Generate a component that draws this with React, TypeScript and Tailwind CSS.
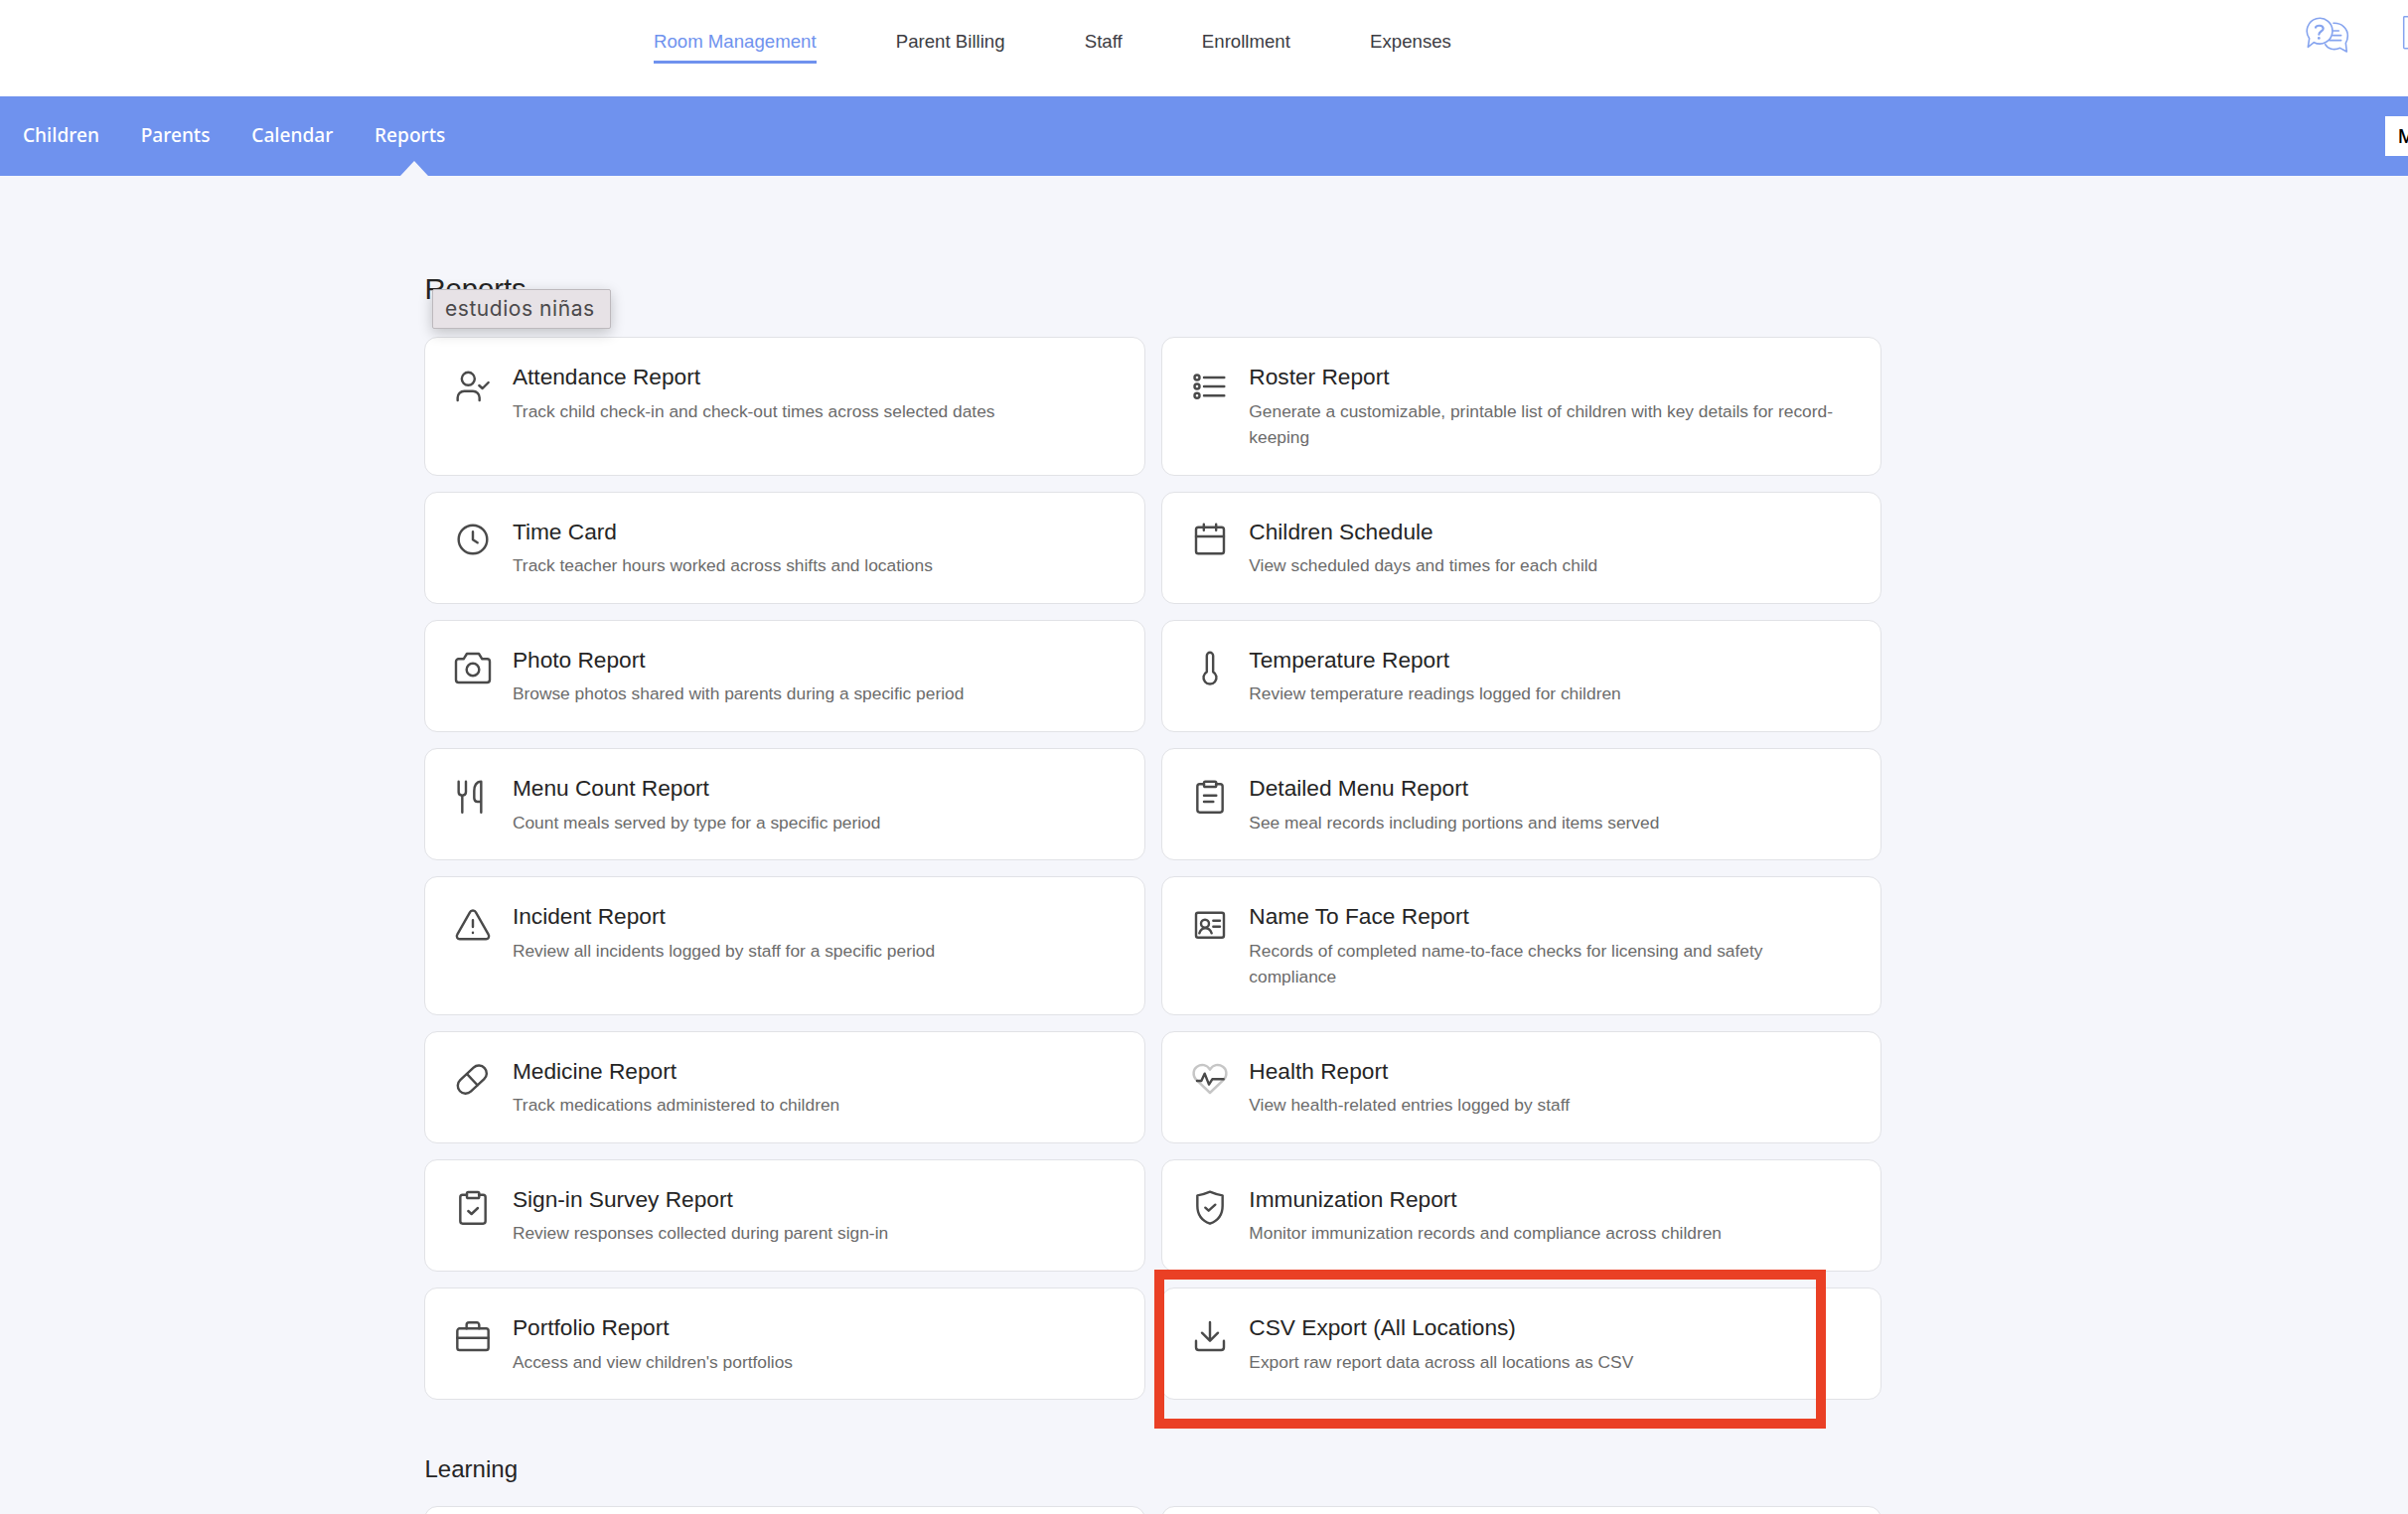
import type { ReactNode } from 'react'

interface Report {
  title: string
  description: string
  icon: ReactNode
}

const mainNav = ['Room Management', 'Parent Billing', 'Staff', 'Enrollment', 'Expenses']

const subNav = ['Children', 'Parents', 'Calendar', 'Reports']

/* =======================
   ICONS
   drawn around 0,0
======================= */

const icons = {
  attendance: (
    <>
      <circle cx="-14" cy="-20" r="19.5" />
      <path d="M-46 45v-8a20 20 0 0 1 20-20h26a20 20 0 0 1 20 20v8M19 0l10 9 18-18" />
    </>
  ),
  roster: (
    <>
      <circle cx="-39" cy="-24" r="7.5" />
      <circle cx="-39" cy="3" r="7.5" />
      <circle cx="-39" cy="31" r="7.5" />
      <path d="M-18 -24H43M-18 3H43M-18 31H43" />
    </>
  ),
  clock: (
    <>
      <circle r="43" />
      <path d="M0 -23V1L14 10" />
    </>
  ),
  calendar: (
    <>
      <rect x="-42" y="-37" width="84" height="80" rx="7" />
      <path d="M-42 -9H42M-18.5 -46V-28M18.5 -46V-28" />
    </>
  ),
  camera: (
    <>
      <path d="M-51 -18a8 8 0 0 1 8-8h15l10-16h36l10 16h15a8 8 0 0 1 8 8v55a8 8 0 0 1-8 8h-86a8 8 0 0 1-8-8z" />
      <circle cy="6" r="19" />
    </>
  ),
  thermometer: (
    <path d="M-9.5 13V-36a9.500 9.500 0 0 1 19 0V13a19.500 19.500 0 1 1-19 0z" />
  ),
  cutlery: (
    <>
      <path d="M-43 -43V-11Q-43 -1 -32 -1T-21 -11V-43M-32 -1V50" />
      <path d="M25 50V-43C10 -43 4 -30 4 -15V7Q4 18 14 18H25" />
    </>
  ),
  menu: (
    <>
      <path d="M-18 -35H-31a7 7 0 0 0-7 7V43a7 7 0 0 0 7 7H31a7 7 0 0 0 7-7V-28a7 7 0 0 0-7-7H18" />
      <rect x="-18" y="-43" width="37" height="16" rx="4" />
      <path d="M-18 -1H19M-18 18H10" />
    </>
  ),
  warning: (
    <>
      <path d="M-9 -38a10 10 0 0 1 18 0L47 29a9 9 0 0 1-8 14H-39a9 9 0 0 1-8-14z" />
      <path d="M0 -14V6M0 23.500V24" />
    </>
  ),
  idCard: (
    <>
      <rect x="-42" y="-37" width="84" height="75" rx="6" />
      <circle cx="-15" cy="-4" r="12" />
      <path d="M-32 25C-28 14 -23 10 -14 10S1 14 5 25M10 -13H30M10 5H30" />
    </>
  ),
  pill: (
    <g transform="translate(-2 2) rotate(-43)">
      <rect x="-51" y="-23.500" width="102" height="47" rx="23.500" />
      <path d="M0 -23V23" />
    </g>
  ),
  heart: (
    <>
      <path
        stroke="#c6c6c6"
        d="M0 42L-42 2C-53 -11 -51 -29 -39 -37C-26 -46 -9 -43 0 -28C9 -43 26 -46 39 -37C51 -29 53 -11 42 2Z"
      />
      <path d="M-39 6H-26L-16 -16L-3 17L7 1H41" />
    </>
  ),
  survey: (
    <>
      <path d="M-18 -37H-31a7 7 0 0 0-7 7V43a7 7 0 0 0 7 7H31a7 7 0 0 0 7-7V-30a7 7 0 0 0-7-7H18" />
      <rect x="-18" y="-45" width="37" height="18" rx="4" />
      <path d="M-14 12l10 9 19-18" />
    </>
  ),
  shield: (
    <>
      <path d="M0 -46Q18 -38 38 -35V-4C38 24 22 42 0 50C-22 42 -38 24 -38 -4V-35Q-18 -38 0 -46Z" />
      <path d="M-14 2l10 9 20-18" />
    </>
  ),
  briefcase: (
    <>
      <rect x="-47" y="-20" width="94" height="65" rx="7" />
      <path d="M-47 8H47M-19 -20v-11a7 7 0 0 1 7-7h24a7 7 0 0 1 7 7v11" />
    </>
  ),
  download: (
    <path d="M0 -39V16M-24 -7L0 17L24 -7M-42 17V37a8 8 0 0 0 8 8H34a8 8 0 0 0 8-8V17" />
  ),
}

const reports: Report[] = [
  {
    title: 'Attendance Report',
    description: 'Track child check-in and check-out times across selected dates',
    icon: icons.attendance,
  },
  {
    title: 'Roster Report',
    description:
      'Generate a customizable, printable list of children with key details for record-keeping',
    icon: icons.roster,
  },
  {
    title: 'Time Card',
    description: 'Track teacher hours worked across shifts and locations',
    icon: icons.clock,
  },
  {
    title: 'Children Schedule',
    description: 'View scheduled days and times for each child',
    icon: icons.calendar,
  },
  {
    title: 'Photo Report',
    description: 'Browse photos shared with parents during a specific period',
    icon: icons.camera,
  },
  {
    title: 'Temperature Report',
    description: 'Review temperature readings logged for children',
    icon: icons.thermometer,
  },
  {
    title: 'Menu Count Report',
    description: 'Count meals served by type for a specific period',
    icon: icons.cutlery,
  },
  {
    title: 'Detailed Menu Report',
    description: 'See meal records including portions and items served',
    icon: icons.menu,
  },
  {
    title: 'Incident Report',
    description: 'Review all incidents logged by staff for a specific period',
    icon: icons.warning,
  },
  {
    title: 'Name To Face Report',
    description: 'Records of completed name-to-face checks for licensing and safety compliance',
    icon: icons.idCard,
  },
  {
    title: 'Medicine Report',
    description: 'Track medications administered to children',
    icon: icons.pill,
  },
  {
    title: 'Health Report',
    description: 'View health-related entries logged by staff',
    icon: icons.heart,
  },
  {
    title: 'Sign-in Survey Report',
    description: 'Review responses collected during parent sign-in',
    icon: icons.survey,
  },
  {
    title: 'Immunization Report',
    description: 'Monitor immunization records and compliance across children',
    icon: icons.shield,
  },
  {
    title: 'Portfolio Report',
    description: "Access and view children's portfolios",
    icon: icons.briefcase,
  },
  {
    title: 'CSV Export (All Locations)',
    description: 'Export raw report data across all locations as CSV',
    icon: icons.download,
  },
]

function ReportCard({ report }: { report: Report }) {
  return (
    <a className="flex rounded-[13px] border border-[#e1e2e6] bg-white pt-[24px] pr-[31px] pb-[24.300px] pl-[28px]">
      <svg
        viewBox="-60 -60 120 120"
        className="mt-[3.200px] size-[40px] shrink-0"
        fill="none"
        stroke="#4a4a4a"
        strokeWidth="7.3"
        strokeLinecap="round"
        strokeLinejoin="round"
      >
        {report.icon}
      </svg>
      <div className="ml-[19.500px]">
        <h3 className="text-[22.700px] leading-[30px] text-[#252525]">{report.title}</h3>
        <p className="mt-[6.300px] text-[17.360px] leading-[26.300px] text-[#6b6b6b]">
          {report.description}
        </p>
      </div>
    </a>
  )
}

export default function App() {
  return (
    <div className="relative h-[1524px] w-[2424px] overflow-hidden bg-[#f5f6fb] font-['Liberation_Sans',Arial,sans-serif]">
      {/* TOP BAR */}
      <header className="flex h-[97px] items-start justify-between bg-white pl-[658px]">
        <nav className="flex gap-[80.200px] pt-[28px]">
          {mainNav.map((item, i) => (
            <a
              key={item}
              className={
                i === 0
                  ? 'h-[36px] border-b-3 border-[#6f92ee] text-[18.640px] leading-[27px] text-[#6f92ee]'
                  : 'h-[36px] text-[18.640px] leading-[27px] text-[#3c3c43]'
              }
            >
              {item}
            </a>
          ))}
        </nav>
        <div className="flex pt-[16px]">
          {/* help */}
          <svg
            viewBox="288 48 138 120"
            className="h-[40px] w-[46px]"
            fill="none"
            stroke="#86a4ef"
            strokeWidth="4.8"
            strokeLinejoin="round"
            strokeLinecap="round"
          >
            <path d="M302 116A38.500 38.500 0 1 1 316 128L298 142Z" />
            <path d="M375 70C400 69 418 86 418 108Q418 120 412 130L415 156L395 145C376 153 358 148 350 134" />
            <path d="M374 93H391M374 107H398M363 122H398" />
            <path strokeWidth="6.5" d="M321 83C323 76 343 74 344 86C344 95 331 94 331 104" />
            <path strokeWidth="8" d="M331 115V115.500" />
          </svg>
          <svg
            viewBox="0 0 27 36"
            className="ml-[51px] h-[36px] w-[7px] shrink-0"
            preserveAspectRatio="xMinYMin slice"
            fill="none"
            stroke="#86a4ef"
            strokeWidth="1.5"
          >
            <rect x="2.7" y="0.7" width="24" height="32" rx="1" />
          </svg>
        </div>
      </header>

      {/* BLUE BAR */}
      <div className="flex h-[80px] items-center justify-between bg-[#6f92ee] pl-[23px]">
        <nav className="flex h-full gap-[41.800px] font-['Noto_Sans',sans-serif] text-[19.100px] font-medium text-white">
          {subNav.map((item) => (
            <a key={item} className="relative flex items-center pb-[2px]">
              {item}
              {item === 'Reports' && (
                <svg
                  viewBox="0 0 28 15"
                  className="absolute bottom-0 left-1/2 ml-[-10px] h-[15px] w-[28px]"
                >
                  <path d="M0 15L14 0L28 15Z" fill="#f5f6fb" />
                </svg>
              )}
            </a>
          ))}
        </nav>
        <button className="h-[40px] w-[23px] overflow-hidden bg-white pl-[13px] text-left font-['Inter',sans-serif] text-[18px] font-medium text-black">
          M
        </button>
      </div>

      {/* REPORTS */}
      <main className="ml-[427.400px] w-[1466.600px] pt-[94px]">
        <h1 className="text-[29.200px] leading-[40px] text-[#252525]">Reports</h1>
        <div className="mt-[28.400px] grid grid-cols-2 gap-[16.300px]">
          {reports.map((r) => (
            <ReportCard key={r.title} report={r} />
          ))}
        </div>

        <h2 className="mt-[52px] text-[24.100px] leading-[36px] text-[#252525]">Learning</h2>
        <div className="mt-[19px] grid grid-cols-2 gap-[16.300px]">
          <div className="h-[113px] rounded-[13px] border border-[#e1e2e6] bg-white" />
          <div className="h-[113px] rounded-[13px] border border-[#e1e2e6] bg-white" />
        </div>
      </main>

      {/* TOOLTIP */}
      <div className="absolute top-[291px] left-[435px] h-[40px] w-[180px] rounded-[2px] border border-[#bdb9bd] bg-[#e7e2e6] pl-[12px] font-['Inter',sans-serif] text-[21px] leading-[38px] tracking-[0.550px] whitespace-nowrap text-[#4b494b] shadow-[0_4px_14px_rgba(0,0,0,0.22)]">
        estudios niñas
      </div>

      {/* HIGHLIGHT */}
      <div className="absolute top-[1278px] left-[1162px] h-[160px] w-[676px] border-[10px] border-[#ea4025]" />
    </div>
  )
}
